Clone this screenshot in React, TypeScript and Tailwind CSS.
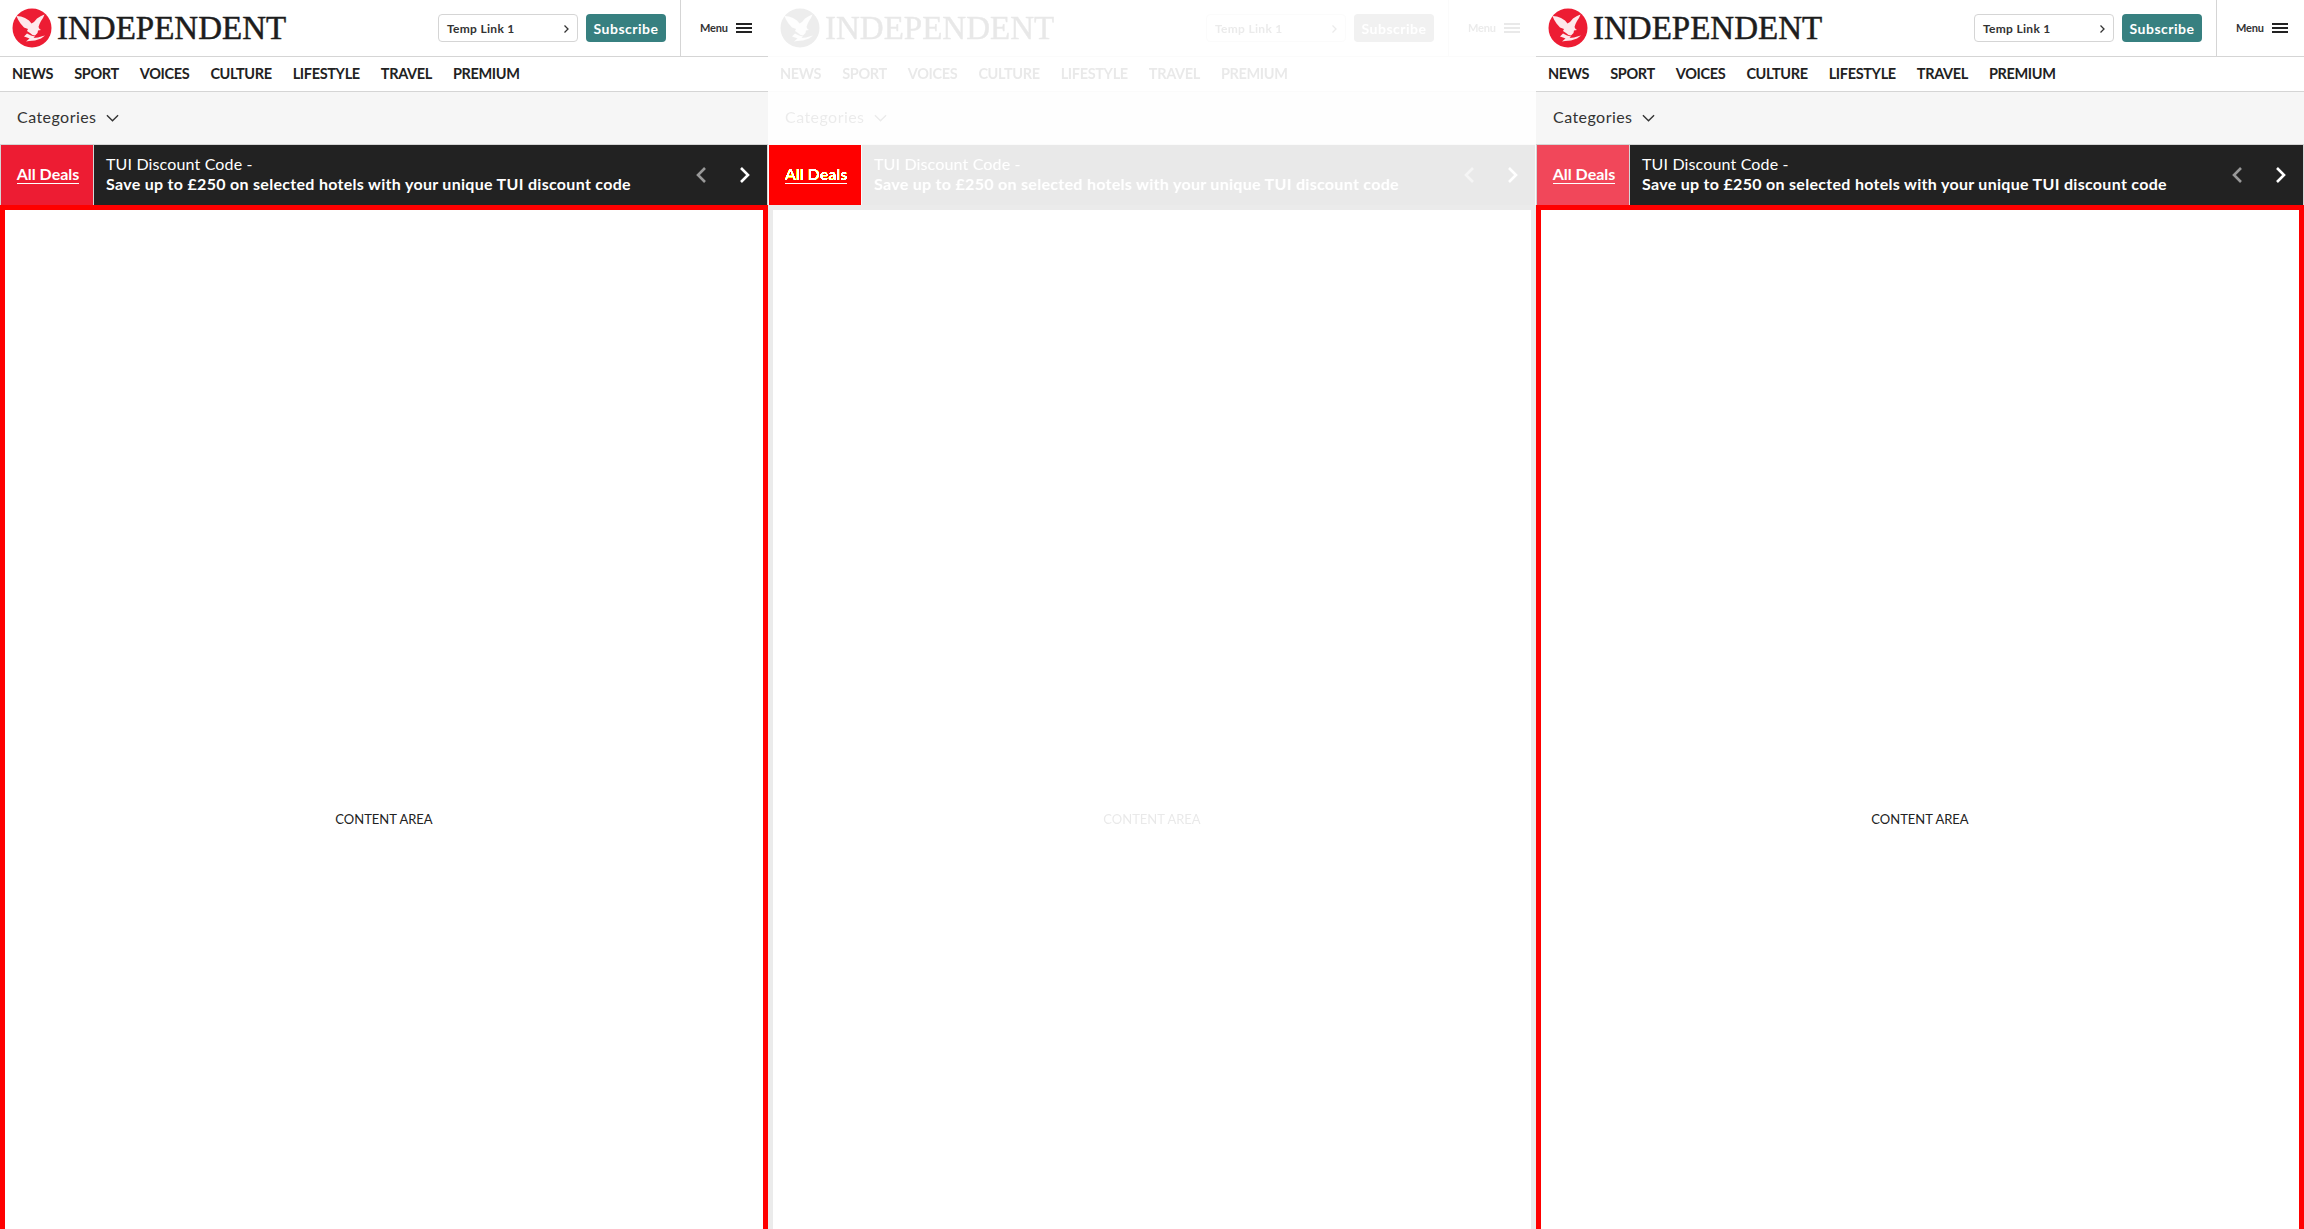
const sans = "font-['Lato',sans-serif]";

function Eagle() {
  return (
    <svg viewBox="0 0 40 40" className="w-[40px] h-[40px] shrink-0">
      <circle cx="20" cy="20" r="19.5" fill="#ed1c33" />
      <path d="M4.5 8 L9 8.5 L13 10 L17 12.5 L19.5 15.5 L22 14 L25 10.5 L29 8 L32.5 6.5 L31 10 L29 13 L27.5 16 L26.5 19 L27.5 21 L29 22 L26 22.5 L25.5 25 L23 27.5 L20.5 27 L18 25 L15 23 L16 21 L12 19.5 L8.5 15.5 L6 11.5 Z" fill="#fff" opacity="0.9" />
      <path d="M12 28.5 L15 25.5 L19 27.5 L23 28.5 L21.5 30 L26 29.5 L31 28 L33 27.5 L29 30.5 L23 32.5 L17 33 L14 33.5 L17.5 30.5 L15 29.5 Z" fill="#fff" opacity="0.9" />
    </svg>
  );
}

function Chevron({ left, className }: { left?: boolean; className: string }) {
  return (
    <svg viewBox="0 0 10 16" className={className} fill="none" stroke="currentColor" strokeWidth="2.6">
      <path d={left ? "M9 1 L2 8 L9 15" : "M1 1 L8 8 L1 15"} />
    </svg>
  );
}

function DealsTab({ variant }: { variant: "solid" | "faded" | "hot" }) {
  const bg = variant === "solid" ? "bg-[#ed1c33]" : variant === "faded" ? "bg-[#f1475a]" : "bg-[#f05000] [filter:contrast(20)]";
  return (
    <div className={`${bg} w-[92px] h-full flex items-center justify-center shrink-0 pl-[2px]`}>
      <span className="text-white text-[16px] font-bold leading-[18px] border-b border-white mb-[1px]">All Deals</span>
    </div>
  );
}

function Panel({ variant }: { variant: "solid" | "faded" | "hot" }) {
  const muted = variant === "hot";
  return (
    <div className="relative w-[768px] h-[1434px] shrink-0 overflow-hidden">
      <div className={`h-full flex flex-col ${muted ? "grayscale opacity-10" : ""}`}>
        <header className="h-[57px] flex border-b border-[#d5d5d5] shrink-0">
          <div className="flex-1 flex items-center pl-[12px]">
            <Eagle />
            <span className="ml-[5px] font-['Liberation_Serif',serif] text-[33px] leading-none text-[#1d1d1d] pt-[1px] [-webkit-text-stroke:0.5px_#1d1d1d]">INDEPENDENT</span>
          </div>
          <div className="flex items-center">
            <div className="w-[140px] h-[28px] border border-[#d5d5d5] rounded-[4px] flex items-center justify-between pl-[8px] pr-[8px] mr-[8px] text-[12px] font-bold text-[#333] tracking-[0.3px]">
              <span className="mt-[1px]">Temp Link 1</span>
              <Chevron className="w-[5px] h-[8px] text-[#333] mt-[2px]" />
            </div>
            <div className="w-[80px] h-[28px] rounded-[4px] bg-[#378080] text-white text-[14px] font-bold flex items-center justify-center tracking-[0.5px] mr-[14px]">Subscribe</div>
          </div>
          <div className="w-[88px] border-l border-[#d5d5d5] flex items-center pl-[19px] gap-[8px]">
            <span className="text-[11px] font-bold text-[#333] tracking-[-0.2px]">Menu</span>
            <div className="w-[16px] h-[10px] flex flex-col justify-between">
              <div className="h-[2px] bg-[#222]" />
              <div className="h-[2px] bg-[#222]" />
              <div className="h-[2px] bg-[#222]" />
            </div>
          </div>
        </header>
        <nav className="h-[35px] flex items-center gap-[21px] pl-[12px] border-b border-[#d5d5d5] text-[14.5px] tracking-[-0.35px] font-bold text-[#222] shrink-0">
          {["NEWS", "SPORT", "VOICES", "CULTURE", "LIFESTYLE", "TRAVEL", "PREMIUM"].map((n) => (
            <span key={n}>{n}</span>
          ))}
        </nav>
        <div className="h-[53px] bg-[#f6f6f6] border-b border-[#d5d5d5] flex items-center pl-[17px] gap-[10px] text-[16px] tracking-[0.45px] text-[#333] shrink-0">
          <span className="mb-[2px]">Categories</span>
          <svg viewBox="0 0 14 8" className="w-[13px] h-[8px]" fill="none" stroke="#333" strokeWidth="1.5">
            <path d="M1 1 L7 7 L13 1" />
          </svg>
        </div>
        <div className="h-[60px] bg-[#222] flex items-center border-x border-[#d5d5d5] shrink-0">
          <DealsTab variant={variant} />
          <div className="w-px h-full bg-[#d5d5d5] shrink-0" />
          <div className="flex-1 pl-[12px] mb-[2px] text-white text-[16px] leading-[20px]">
            <div className="tracking-[0.15px]">TUI Discount Code -</div>
            <div className="font-bold tracking-[0.3px]">Save up to £250 on selected hotels with your unique TUI discount code</div>
          </div>
          <Chevron left className="w-[10px] h-[16px] text-[#999] mr-[34px]" />
          <Chevron className="w-[10px] h-[16px] text-white mr-[17px]" />
        </div>
        <main className="flex-1 border-[5px] border-[#ff0000] flex items-center justify-center text-[13px] text-[#222]">CONTENT AREA</main>
      </div>
      {muted && (
        <div className="absolute left-[1px] top-[145px] h-[60px]">
          <DealsTab variant="hot" />
        </div>
      )}
    </div>
  );
}

export default function App() {
  return (
    <div className={`h-screen overflow-hidden bg-white flex ${sans}`}>
      <Panel variant="solid" />
      <Panel variant="hot" />
      <Panel variant="faded" />
    </div>
  );
}
